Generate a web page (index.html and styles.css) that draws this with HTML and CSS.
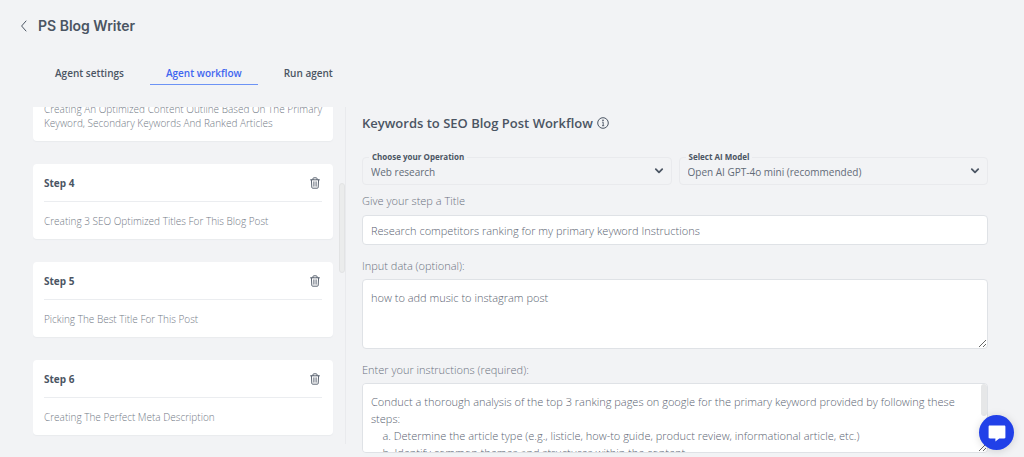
FILE: index.html
```html
<!DOCTYPE html>
<html lang="en">
<head>
<meta charset="utf-8">
<meta name="viewport" content="width=device-width, initial-scale=1">
<title>PS Blog Writer</title>
<link rel="stylesheet" href="styles.css">
</head>
<body>
<svg class="defs" aria-hidden="true">
  <symbol id="trash" viewBox="0 0 12 12">
    <path d="M1.6 2.8h8.8M4 2.6V1.5c0-.4.3-.7.7-.7h2.6c.4 0 .7.3.7.7v1.1M2.4 3l.4 7.4c0 .5.4.8.9.8h4.6c.5 0 .9-.3.9-.8L9.6 3M4.9 4.8v4.4M7.1 4.8v4.4" fill="none" stroke="currentColor" stroke-width="0.9" stroke-linecap="round"/>
  </symbol>
  <symbol id="chevron" viewBox="0 0 10 8">
    <path d="M1.8 2.2L5 5.3l3.2-3.1" fill="none" stroke="currentColor" stroke-width="1.8" stroke-linecap="round" stroke-linejoin="round"/>
  </symbol>
</svg>
<header class="page-header">
  <button class="back" type="button" aria-label="Back">
    <svg width="8" height="12" viewBox="0 0 8 12"><path d="M6 1L1.6 6 6 11" fill="none" stroke="currentColor" stroke-width="1" stroke-linecap="round" stroke-linejoin="round"/></svg>
  </button>
  <h1>PS Blog Writer</h1>
</header>
<nav class="tabs">
  <a href="#settings">Agent settings</a>
  <a href="#workflow" class="active" aria-current="page">Agent workflow</a>
  <a href="#run">Run agent</a>
</nav>
<main class="content">
  <section class="steps" aria-label="Steps">
    <article class="step">
      <header><h2>Step 3</h2><button type="button" aria-label="Delete step 3"><svg width="12" height="12"><use href="#trash"/></svg></button></header>
      <p>Creating An Optimized Content Outline Based On The Primary Keyword, Secondary Keywords And Ranked Articles</p>
    </article>
    <article class="step">
      <header><h2>Step 4</h2><button type="button" aria-label="Delete step 4"><svg width="12" height="12"><use href="#trash"/></svg></button></header>
      <p>Creating 3 SEO Optimized Titles For This Blog Post</p>
    </article>
    <article class="step">
      <header><h2>Step 5</h2><button type="button" aria-label="Delete step 5"><svg width="12" height="12"><use href="#trash"/></svg></button></header>
      <p>Picking The Best Title For This Post</p>
    </article>
    <article class="step">
      <header><h2>Step 6</h2><button type="button" aria-label="Delete step 6"><svg width="12" height="12"><use href="#trash"/></svg></button></header>
      <p>Creating The Perfect Meta Description</p>
    </article>
    <span class="thumb"></span>
  </section>
  <form class="editor">
    <h2 class="editor-title">Keywords to SEO Blog Post Workflow
      <svg width="12" height="12" viewBox="0 0 12 12" aria-hidden="true"><circle cx="6" cy="6" r="5.3" fill="none" stroke="currentColor"/><path d="M5.2 5.2h1v3.4M5 8.7h2.2" fill="none" stroke="currentColor" stroke-width="0.9"/><circle cx="6" cy="3.4" r="0.8" fill="currentColor"/></svg>
    </h2>
    <div class="selects">
      <div class="select">
        <label for="operation">Choose your Operation</label>
        <select id="operation"><option>Web research</option></select>
        <svg class="arrow" width="10" height="8"><use href="#chevron"/></svg>
      </div>
      <div class="select">
        <label for="model">Select AI Model</label>
        <select id="model"><option>Open AI GPT-4o mini (recommended)</option></select>
        <svg class="arrow" width="10" height="8"><use href="#chevron"/></svg>
      </div>
    </div>
    <label class="caption first" for="title">Give your step a Title</label>
    <input class="box" id="title" type="text" value="Research competitors ranking for my primary keyword Instructions">
    <label class="caption" for="data">Input data (optional):</label>
    <textarea class="box" id="data">how to add music to instagram post</textarea>
    <label class="caption" for="instructions">Enter your instructions (required):</label>
    <div class="scroll-box">
      <textarea class="box" id="instructions">Conduct a thorough analysis of the top 3 ranking pages on google for the primary keyword provided by following these steps:
    a. Determine the article type (e.g., listicle, how-to guide, product review, informational article, etc.)
    b. Identify common themes and structures within the content.</textarea>
      <span class="box-thumb"></span>
    </div>
  </form>
</main>
<button class="chat" type="button" aria-label="Open chat">
  <svg width="20" height="20" viewBox="0 0 20 20"><path d="M2.8 2.6h14.4c.8 0 1.2.4 1.2 1.2v10.4c0 .8-.4 1.2-1.2 1.2h-5l-3.8 3v-3H2.8c-.8 0-1.2-.4-1.2-1.2V3.8c0-.8.4-1.2 1.2-1.2z" fill="#fff"/></svg>
</button>
</body>
</html>
```
FILE: styles.css
```css
* { box-sizing: border-box; }

body {
  display: flex;
  flex-direction: column;
  height: 100vh;
  margin: 0;
  overflow: hidden;
  background: #f2f3f5;
  color: #4b5563;
  font-family: "Open Sans", "Noto Sans", sans-serif;
  font-size: 10px;
}

h1, h2, p { margin: 0; }

button {
  display: flex;
  align-items: center;
  justify-content: center;
  padding: 0;
  border: 0;
  background: none;
  color: inherit;
}

.defs { position: absolute; width: 0; height: 0; }

.page-header {
  display: flex;
  align-items: center;
  gap: 10px;
  padding: 16px 20px 0;
}

.page-header h1 {
  font: 600 14px/20px Inter, sans-serif;
}

.tabs {
  display: flex;
  gap: 10px;
  padding: 26px 39px 0;
}

.tabs a {
  padding: 0 16px;
  border-bottom: 1px solid transparent;
  color: #4b5563;
  font-weight: 600;
  line-height: 22px;
  text-decoration: none;
}

.tabs a.active {
  border-color: #6d93f5;
  color: #3f66f0;
}

.content {
  display: flex;
  flex: 1;
  gap: 16px;
  min-height: 0;
  padding: 22px 36px 5px 33px;
}

.steps {
  position: relative;
  display: flex;
  flex: 0 0 313px;
  flex-direction: column;
  justify-content: flex-end;
  gap: 23px;
  margin-bottom: 8px;
  padding: 0 12px 9px 0;
  border-right: 1px solid #e9eaed;
  overflow: hidden;
}

.step {
  flex: none;
  padding: 11px;
  border-radius: 4px;
  background: #fff;
  box-shadow: 0 1px 1px #e9ebee;
}

.step header {
  display: flex;
  justify-content: space-between;
  align-items: center;
  height: 27px;
  padding: 0 1px 10px 0;
  border-bottom: 1px solid #ebedf0;
}

.step h2 {
  font-size: 10px;
  font-weight: 700;
  line-height: 16px;
}

.step p {
  padding-top: 12px;
  color: #747b87;
  font-weight: 300;
  line-height: 14px;
}

.thumb {
  position: absolute;
  top: 76px;
  right: 0;
  width: 6px;
  height: 90px;
  border: 1px solid #e2e3e4;
  border-radius: 3px;
  background: #ebecec;
}

.editor {
  display: flex;
  flex: 1;
  flex-direction: column;
  min-width: 0;
  padding-top: 6px;
}

.editor-title {
  display: flex;
  align-items: center;
  gap: 4px;
  font-size: 13px;
  font-weight: 600;
  line-height: 20px;
}

.selects {
  display: grid;
  grid-template-columns: 1fr 1fr;
  gap: 7px;
  padding-top: 24px;
}

.select { position: relative; }

.select label {
  position: absolute;
  top: -6px;
  left: 7px;
  padding: 0 3px;
  background: #f2f3f5;
  font-size: 8px;
  font-weight: 700;
  line-height: 12px;
}

.select select {
  display: block;
  width: 100%;
  height: 28px;
  padding: 2px 8px 0;
  border: 1px solid #e9eaed;
  border-radius: 4px;
  appearance: none;
  background: none;
  color: #626b78;
  font: inherit;
}

.arrow {
  position: absolute;
  top: 10px;
  right: 8px;
  pointer-events: none;
}

.caption {
  padding: 13px 0 5px;
  color: #6b7280;
  line-height: 16px;
  font-size: 11px;
  font-weight: 300;
}

.caption.first { padding-top: 8px; padding-bottom: 6px; }

.box {
  display: block;
  flex: none;
  width: 100%;
  height: 70px;
  padding: 9px 8px;
  border: 1px solid #dfe2e6;
  border-radius: 4px;
  background: #fff;
  color: #5b6472;
  font: 300 11px/17px "Open Sans", "Noto Sans", sans-serif;
}

input.box {
  height: 30px;
  padding: 0 8px;
}

.scroll-box { position: relative; }

.box-thumb {
  position: absolute;
  top: 1px;
  right: 1px;
  width: 6px;
  height: 32px;
  border-radius: 3px;
  background: #e6e7e8;
}

.chat {
  position: fixed;
  right: 10px;
  bottom: 7px;
  width: 35px;
  height: 35px;
  border-radius: 50%;
  background: #2140e8;
  box-shadow: 0 1px 8px #00000026;
}
```
